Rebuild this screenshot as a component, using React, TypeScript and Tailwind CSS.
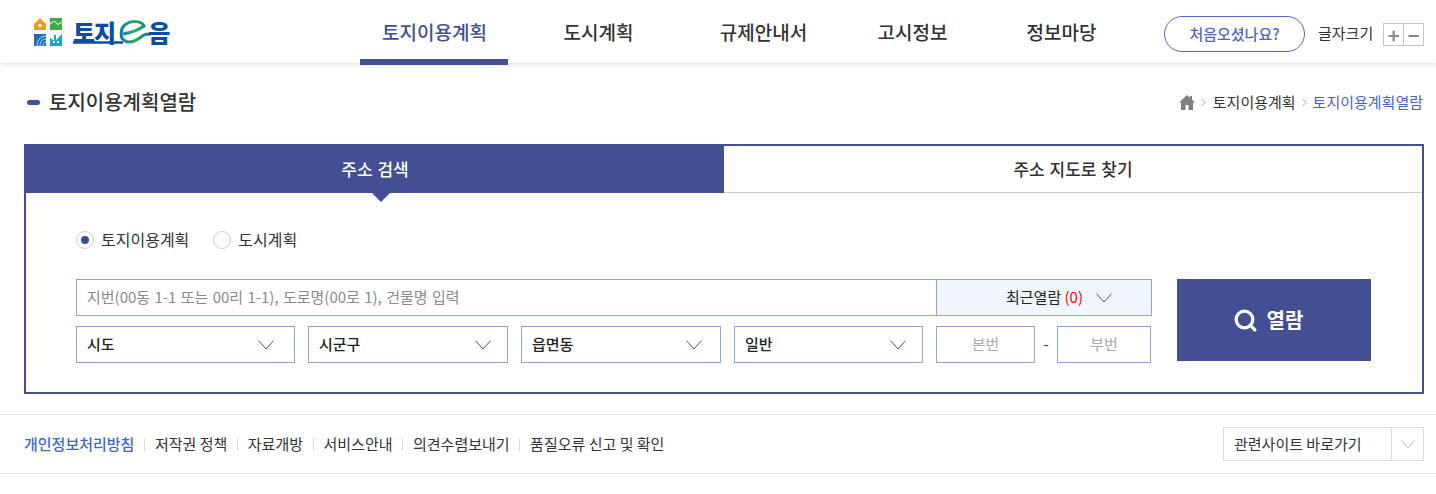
import { Search, ChevronRight } from "lucide-react";

const navItems = [
  { label: "토지이용계획", width: "w-[148px]", active: true },
  { label: "도시계획", width: "w-[180px]", active: false },
  { label: "규제안내서", width: "w-[150px]", active: false },
  { label: "고시정보", width: "w-[148px]", active: false },
  { label: "정보마당", width: "w-[150px]", active: false },
];

const footerLinks = ["저작권 정책", "자료개방", "서비스안내", "의견수렴보내기", "품질오류 신고 및 확인"];

function Chevron({ color = "#35508f", size = 16 }: { color?: string; size?: number }) {
  return (
    <svg width={size} height={size * 0.6} viewBox="0 0 16 9.6" className="shrink-0">
      <path d="M0.5 0.7 L8 9 L15.5 0.7" fill="none" stroke={color} strokeWidth="1" />
    </svg>
  );
}

function Logo() {
  return (
    <div className="flex items-center ml-[34px] w-[326px]">
      <svg width="28" height="28" viewBox="0 0 28 28" className="shrink-0">
        <path d="M0 6 L6 0 L12 6 V12 H0 Z" fill="#f7981d" />
        <rect x="4.5" y="6" width="3" height="3" fill="#fff" />
        <rect x="16" y="0" width="12" height="12" fill="#3fae49" />
        <path d="M16 6 L20 3 L24 6.5 L28 4" fill="none" stroke="#fff" strokeWidth="1" />
        <rect x="0" y="16" width="12" height="12" fill="#1b6fb5" />
        <path d="M12 18 C6 18 3 23 3 28 M12 21 C8 21 6 24 6 28 M12 24 C10 24 9 26 9 28" fill="none" stroke="#bfe0f2" strokeWidth="1" />
        <path d="M16 28 V20 L20 22.5 V17 L22 17 V22 L28 16 V28 Z" fill="#1aa7cf" />
        <rect x="19" y="23" width="2" height="2" fill="#fff" />
        <rect x="23" y="23" width="2" height="2" fill="#fff" />
      </svg>
      <div className="flex items-center ml-[11px] h-[30px] text-[#0b4ea2] text-[24px] font-black leading-none tracking-[-1px]">
        <span>토지</span>
        <svg width="38" height="24" viewBox="0 0 38 24" className="-ml-[2px] -mr-[3px] shrink-0 overflow-visible">
          <defs>
            <linearGradient id="eGrad" x1="0" x2="1" y1="0" y2="0">
              <stop offset="0" stopColor="#0b7fa0" />
              <stop offset="0.45" stopColor="#2fae5a" />
              <stop offset="1" stopColor="#0b6f9c" />
            </linearGradient>
          </defs>
          <path
            d="M10 14 C16 13 24 11 31 6 C29 1 19 0 13 4 C7 8 6 19 13 21.5 C21 24 27 17 31 15 C33 14 35 14 38 14"
            fill="none"
            stroke="url(#eGrad)"
            strokeWidth="3"
          />
          <path d="M-40 22.5 H10" fill="none" stroke="#0b4ea2" strokeWidth="2.4" />
        </svg>
        <span>음</span>
      </div>
    </div>
  );
}

function Header() {
  return (
    <header className="relative z-10 flex h-[63px] items-stretch bg-white shadow-[0_1px_4px_rgba(0,0,0,0.15)]">
      <Logo />
      <nav className="flex">
        {navItems.map((item) => (
          <a
            key={item.label}
            className={`${item.width} relative flex h-[65px] justify-center pl-[1px] pt-[19px] text-[19px] font-medium leading-[26px] ${
              item.active ? "text-[#434e93] border-b-[6px] border-[#434e93]" : "text-[#333]"
            }`}
          >
            {item.label}
          </a>
        ))}
      </nav>
      <div className="flex items-center ml-[28px] h-[68px]">
        <button className="flex h-[36px] w-[141px] items-center justify-center rounded-full border border-[#5566c0] text-[15px] font-medium text-[#5566c0]">
          처음오셨나요?
        </button>
        <span className="ml-[13px] mb-[2px] text-[15px] text-[#333]">글자크기</span>
        <div className="ml-[10px] mt-[1px] flex h-[23px] w-[41px] border border-[#c4c4c4] text-[#888]">
          <span className="flex flex-1 items-center justify-center border-r border-[#c4c4c4] text-[20px] font-bold leading-none">+</span>
          <span className="flex flex-1 items-center justify-center text-[20px] font-bold leading-none">−</span>
        </div>
      </div>
    </header>
  );
}

function TitleBar() {
  return (
    <div className="flex h-[81px] items-center justify-between pl-[27px] pr-[13px] pb-[3px]">
      <div className="flex items-center gap-[9px]">
        <span className="h-[5px] w-[13px] rounded-full bg-[#434e93]" />
        <h1 className="text-[20px] font-medium leading-[26px] text-[#333]">토지이용계획열람</h1>
      </div>
      <div className="flex items-center text-[15px]">
        <svg width="16" height="15" viewBox="0 0 16 15" className="mr-[1px]">
          <path d="M8 0 L11 2.7 V1 H13 V4.5 L16 7.5 H14 V15 H9.5 V10 H6.5 V15 H2 V7.5 H0 Z" fill="#808080" />
        </svg>
        <ChevronRight size={13} strokeWidth={1} className="mx-[1px] text-[#555]" />
        <span className="mx-[2px] text-[#333]">토지이용계획</span>
        <ChevronRight size={13} strokeWidth={1} className="text-[#555]" />
        <span className="ml-[2px] text-[#4a63c8]">토지이용계획열람</span>
      </div>
    </div>
  );
}

function Radio({ label, checked }: { label: string; checked?: boolean }) {
  return (
    <label className="flex items-center gap-[7px] text-[16px] text-[#333]">
      <span className="flex h-[18px] w-[18px] items-center justify-center rounded-full border border-[#ccc] bg-white">
        {checked && <span className="h-[8px] w-[8px] rounded-full bg-[#35508f]" />}
      </span>
      <span className="pb-[2px]">{label}</span>
    </label>
  );
}

function SelectBox({ label, width, right }: { label: string; width: string; right: string }) {
  return (
    <div className={`${width} ${right} flex h-[37px] items-center justify-between border border-[#8fa6d2] pl-[10px] text-[15px] font-medium text-[#222]`}>
      <span>{label}</span>
      <Chevron />
    </div>
  );
}

function SearchPanel() {
  return (
    <section className="ml-[24px] mr-[12px] h-[250px] border-2 border-[#434e93]">
      <div className="relative flex h-[47px] border-b border-[#ccc]">
        <div className="relative flex w-[698px] items-center justify-center -mt-[1px] h-[48px] bg-[#434e93] text-[17px] font-medium text-white [word-spacing:1px]">
          주소 검색
          <span className="absolute left-[355px] top-full h-0 w-0 -translate-x-1/2 border-x-[9px] border-t-[9px] border-x-transparent border-t-[#434e93]" />
        </div>
        <div className="flex flex-1 items-center justify-center text-[17px] font-medium text-[#333] [word-spacing:1px]">주소 지도로 찾기</div>
      </div>
      <div className="pl-[50px] pt-[37px]">
        <div className="flex h-[19px] items-center gap-[24px]">
          <Radio label="토지이용계획" checked />
          <Radio label="도시계획" />
        </div>
        <div className="mt-[30px] flex">
          <div className="w-[1076px]">
            <div className="flex h-[37px] border border-[#8fa6d2]">
              <div className="flex flex-1 items-center pl-[10px] text-[15px] text-[#8a8a8a] [word-spacing:1px]">
                지번(00동 1-1 또는 00리 1-1), 도로명(00로 1), 건물명 입력
              </div>
              <div className="flex w-[215px] items-center justify-center gap-[13px] border-l border-[#8fa6d2] bg-[#f1f6fd] pl-[30px] text-[15px] text-[#222]">
                <span>
                  최근열람 <span className="text-[#f00]">(0)</span>
                </span>
                <Chevron />
              </div>
            </div>
            <div className="mt-[10px] flex items-center">
              <SelectBox label="시도" width="w-[219px]" right="pr-[20px]" />
              <div className="w-[13px]" />
              <SelectBox label="시군구" width="w-[200px]" right="pr-[16px]" />
              <div className="w-[13px]" />
              <SelectBox label="읍면동" width="w-[200px]" right="pr-[18px]" />
              <div className="w-[13px]" />
              <SelectBox label="일반" width="w-[189px]" right="pr-[16px]" />
              <div className="w-[13px]" />
              <div className="flex h-[37px] w-[99px] items-center justify-center border border-[#8fa6d2] text-[15px] text-[#aaa]">본번</div>
              <span className="w-[22px] text-center text-[15px] text-[#333]">-</span>
              <div className="flex h-[37px] w-[94px] items-center justify-center border border-[#8fa6d2] text-[15px] text-[#aaa]">부번</div>
            </div>
          </div>
          <button className="ml-[25px] flex h-[82px] w-[194px] items-center justify-center gap-[9px] bg-[#434e93] pr-[12px] text-[20px] font-bold text-white">
            <Search size={25} strokeWidth={3.2} />
            열람
          </button>
        </div>
      </div>
    </section>
  );
}

function Footer() {
  return (
    <footer className="mt-[20px] flex h-[60px] items-center justify-between border-y border-[#e4e4e0] pl-[24px] pr-[12px]">
      <ul className="flex items-center text-[15px] text-[#333]">
        <li className="font-medium text-[#3f67c9]">개인정보처리방침</li>
        {footerLinks.map((link) => (
          <li key={link} className="flex items-center">
            <span className="mx-[9.75px] h-[13px] w-px bg-[#ddd]" />
            {link}
          </li>
        ))}
      </ul>
      <div className="flex h-[34px] w-[201px] border border-[#ddd] text-[15px] text-[#333]">
        <span className="flex flex-1 items-center pl-[10px]">관련사이트 바로가기</span>
        <span className="flex w-[32px] items-center justify-center border-l border-[#ddd]">
          <Chevron color="#aaa" size={14} />
        </span>
      </div>
    </footer>
  );
}

export default function App() {
  return (
    <div className="h-[494px] w-[1436px] overflow-hidden bg-white font-['Noto_Sans_CJK_KR','Noto_Sans',sans-serif]">
      <Header />
      <TitleBar />
      <SearchPanel />
      <Footer />
    </div>
  );
}
